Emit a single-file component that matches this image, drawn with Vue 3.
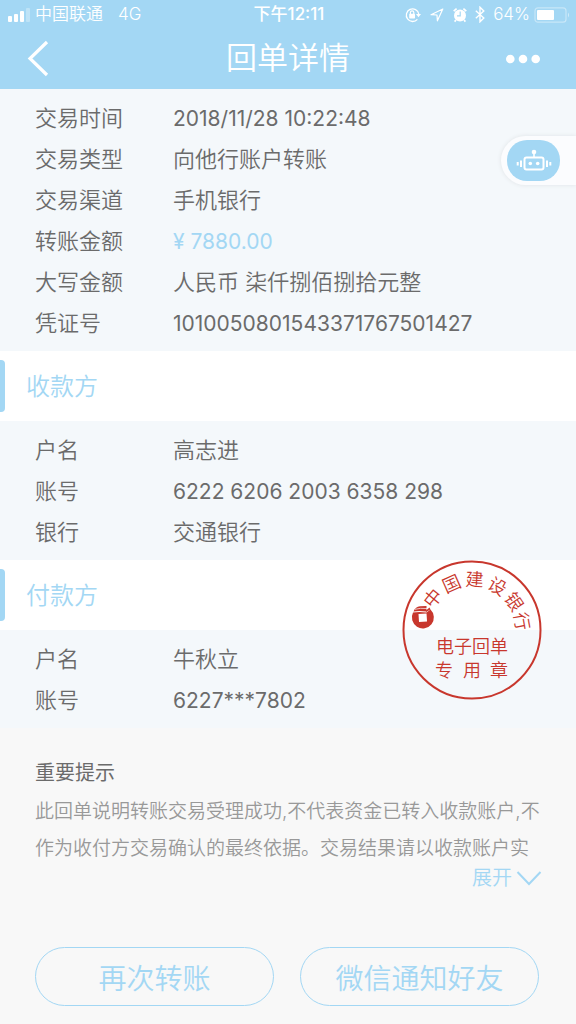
<script setup>
const sections = [
  {
    rows: [
      { label: '交易时间', value: '2018/11/28 10:22:48', numeric: true },
      { label: '交易类型', value: '向他行账户转账' },
      { label: '交易渠道', value: '手机银行' },
      { label: '转账金额', value: '¥ 7880.00', numeric: true, accent: true },
      { label: '大写金额', value: '人民币 柒仟捌佰捌拾元整' },
      { label: '凭证号', value: '1010050801543371767501427', numeric: true },
    ],
  },
  {
    title: '收款方',
    rows: [
      { label: '户名', value: '高志进' },
      { label: '账号', value: '6222 6206 2003 6358 298', numeric: true },
      { label: '银行', value: '交通银行' },
    ],
  },
  {
    title: '付款方',
    stamp: true,
    rows: [
      { label: '户名', value: '牛秋立' },
      { label: '账号', value: '6227***7802', numeric: true },
    ],
  },
]

const arc = [
  { ch: '中', angle: -51 },
  { ch: '国', angle: -24 },
  { ch: '建', angle: 3 },
  { ch: '设', angle: 30 },
  { ch: '银', angle: 56 },
  { ch: '行', angle: 80 },
]
</script>

<template>
  <div class="page">
    <header class="top">
      <div class="status">
        <div class="status-left">
          <svg class="signal" width="24" height="16" viewBox="0 0 24 16" aria-hidden="true">
            <rect x="0" y="9" width="4" height="6" rx="1" />
            <rect x="6" y="7" width="4" height="8" rx="1" />
            <rect x="12" y="4" width="4" height="11" rx="1" />
            <rect x="18" y="1" width="4" height="14" rx="1" opacity=".3" />
          </svg>
          <span>中国联通</span>
          <span class="net">4G</span>
        </div>
        <span class="clock">下午12:11</span>
        <div class="status-right">
          <svg width="16" height="16" viewBox="0 0 16 16" aria-hidden="true">
            <path d="M12.4 12.3A6.3 6.3 0 1 1 13.8 7" fill="none" stroke="#fff" stroke-width="1.3" />
            <path d="M11 7h5l-2.5 3.2z" />
            <rect x="4.2" y="6.8" width="5.8" height="4.6" rx=".6" />
            <path d="M5.4 7V5.6a1.7 1.7 0 0 1 3.4 0V7" fill="none" stroke="#fff" stroke-width="1.2" />
          </svg>
          <svg class="locate" width="14" height="14" viewBox="0 0 14 14" aria-hidden="true">
            <path d="M12.8 1L1 6.7l6 .3.4 5.8z" fill="none" stroke="#fff" stroke-width="1.2" stroke-linejoin="round" />
          </svg>
          <svg class="alarm" width="14" height="16" viewBox="0 0 14 16" aria-hidden="true">
            <circle cx="7" cy="8.4" r="6" />
            <path d="M.7 4.2L3.6 1.6M13.3 4.2l-2.9-2.6M3 13l-1.4 1.6M11 13l1.4 1.6" stroke="#fff" stroke-width="1.7" />
            <path d="M7.2 4.6v4.2H4" fill="none" stroke="#a3d7f4" stroke-width="1.2" />
          </svg>
          <svg class="bluetooth" width="10" height="17" viewBox="0 0 10 17" aria-hidden="true">
            <path d="M.8 4.8l8 7.2L5 15.8V1.2L8.8 5l-8 7.2" fill="none" stroke="#fff" stroke-width="1.4" />
          </svg>
          <span>64%</span>
          <svg class="battery" width="36" height="16" viewBox="0 0 36 16" aria-hidden="true">
            <rect x="1" y=".8" width="31" height="14.4" rx="3" fill="none" stroke="#fff" stroke-opacity=".4" stroke-width="1.2" />
            <rect x="3" y="3" width="17" height="10" rx="1" />
            <path d="M34 5.5q2 2.5 0 5z" opacity=".5" />
          </svg>
        </div>
      </div>
      <div class="nav">
        <button class="back" type="button" aria-label="返回">
          <svg width="24" height="38" viewBox="0 0 24 38" aria-hidden="true">
            <path d="M21 2L4 18.5 21 35" fill="none" stroke="#fff" stroke-width="3.2" />
          </svg>
        </button>
        <h1>回单详情</h1>
        <button class="more" type="button" aria-label="更多">
          <svg width="34" height="10" viewBox="0 0 34 10" aria-hidden="true">
            <circle cx="4.3" cy="5" r="4.3" />
            <circle cx="17" cy="5" r="4.3" />
            <circle cx="29.7" cy="5" r="4.3" />
          </svg>
        </button>
      </div>
    </header>

    <main>
      <section v-for="(section, i) in sections" :key="i" class="section">
        <h2 v-if="section.title">{{ section.title }}</h2>
        <dl>
          <div v-for="row in section.rows" :key="row.label" class="row">
            <dt>{{ row.label }}</dt>
            <dd :class="{ accent: row.accent, numeric: row.numeric }">{{ row.value }}</dd>
          </div>
        </dl>
        <svg v-if="section.stamp" class="stamp" width="140" height="140" viewBox="0 0 140 140">
          <circle cx="70" cy="70" r="68.5" fill="none" stroke="#c8372d" stroke-width="2" />
          <text
            v-for="item in arc"
            :key="item.ch"
            x="70"
            y="26"
            :transform="`rotate(${item.angle} 70 70)`"
          >{{ item.ch }}</text>
          <path d="M11 52.500Q17 51.500 24.500 52.500L28.500 49.500A11 11 0 1 1 11 52.500z" />
          <path d="M11.500 51.500Q13.500 46.600 18 46.300L24.500 46V51.500Q17 50.500 11.500 51.500z" />
          <path d="M24 52l4.500-2.500-1-2-3.500 3z" />
          <path d="M13 49.300Q18 47.800 25 48.500" fill="none" stroke="#fff" stroke-width=".7" />
          <path d="M16.500 54l8-.5.5 8-8 .5z" fill="#fff" />
          <text x="70" y="93">电子回单</text>
          <text x="42" y="117">专</text>
          <text x="70" y="117">用</text>
          <text x="97" y="117">章</text>
        </svg>
      </section>

      <section class="notice">
        <h3>重要提示</h3>
        <p>此回单说明转账交易受理成功,不代表资金已转入收款账户,不<br />作为收付方交易确认的最终依据。交易结果请以收款账户实</p>
        <button class="expand" type="button">
          展开
          <svg width="26" height="16" viewBox="0 0 26 16" aria-hidden="true">
            <path d="M1.5 2L13 14 24.5 2" fill="none" stroke="#a3d7f4" stroke-width="2" />
          </svg>
        </button>
      </section>
    </main>

    <button class="assistant" type="button" aria-label="智能客服">
      <span class="bot">
        <svg width="36" height="24" viewBox="0 0 36 24" aria-hidden="true">
          <circle cx="18" cy="3" r="2.3" />
          <path d="M18 4v5" stroke="#fff" stroke-width="1.6" />
          <rect x="8.5" y="8.5" width="19" height="12" rx="2" fill="none" stroke="#fff" stroke-width="2" />
          <circle cx="14.3" cy="14.5" r="1.8" />
          <circle cx="21.7" cy="14.5" r="1.8" />
          <path d="M5 11.5v6.5M31 11.5v6.5" stroke="#fff" stroke-width="2" />
          <path d="M1.7 13v3.5M34.3 13v3.5" stroke="#fff" stroke-width="2" />
        </svg>
      </span>
    </button>

    <footer>
      <button type="button">再次转账</button>
      <button type="button">微信通知好友</button>
    </footer>
  </div>
</template>

<style>
body {
  background: #f8f8f8;
}
</style>

<style scoped>
.page {
  position: relative;
  min-height: 100vh;
  display: flex;
  flex-direction: column;
  background: #f8f8f8;
  color: #6b6b6b;
  font-family: Inter, "Noto Sans CJK SC", sans-serif;
  font-weight: 350;
}
button {
  font: inherit;
  color: inherit;
  background: none;
  border: 0;
  padding: 0;
  cursor: pointer;
}
svg {
  display: block;
  fill: #fff;
}
h1, h2, h3, p, dl, dd {
  margin: 0;
  font-weight: inherit;
}
.top {
  background: #a3d7f4;
  color: #fff;
}
.status {
  display: grid;
  grid-template-columns: 1fr auto 1fr;
  align-items: center;
  height: 29px;
  padding: 0 6px 0 8px;
  font-size: 17px;
  line-height: 29px;
}
.status-left, .status-right {
  display: flex;
  align-items: center;
}
.status-left { gap: 3px; }
.net { margin-left: 12px; }
.clock { font-weight: 500; }
.status-right { justify-content: flex-end; }
.locate { margin-left: 9px; }
.alarm { margin-left: 9px; }
.bluetooth { margin: 0 8px; }
.battery { margin-left: 4px; }
.nav {
  display: grid;
  grid-template-columns: 1fr auto 1fr;
  align-items: center;
  height: 60px;
  padding: 0 26px;
  box-sizing: border-box;
}
.back { justify-self: start; }
.more {
  justify-self: end;
  margin-right: 10px;
}
h1 {
  font-size: 31px;
  line-height: 58px;
  padding-bottom: 2px;
}
.section { position: relative; }
h2 {
  position: relative;
  background: #fff;
  color: #a3d7f4;
  font-size: 24px;
  line-height: 68px;
  padding: 2px 0 0 26px;
}
h2::before {
  content: "";
  position: absolute;
  left: 0;
  top: 9px;
  bottom: 9px;
  width: 5px;
  border-radius: 0 4px 4px 0;
  background: #a3d7f4;
}
dl {
  background: #f4f8fb;
  padding: 9px 35px 7px;
}
.row {
  display: grid;
  grid-template-columns: 138px 1fr;
  font-size: 22px;
  line-height: 41px;
}
.numeric {
  font-size: 21px;
  font-weight: 400;
}
.accent { color: #a3d7f4; }
.stamp {
  position: absolute;
  right: 34px;
  top: 0;
  fill: #c8372d;
  font-size: 18px;
  text-anchor: middle;
}
.notice {
  padding: 25px 34px 0 35px;
}
h3 {
  font-size: 20px;
  line-height: 40px;
  font-weight: 400;
}
.notice p {
  font-size: 19px;
  line-height: 37px;
  color: #999;
  white-space: nowrap;
}
.expand {
  display: flex;
  align-items: center;
  gap: 4px;
  margin-left: auto;
  font-size: 20px;
  line-height: 22px;
  color: #a3d7f4;
}
.assistant {
  position: absolute;
  right: 0;
  top: 136px;
  padding: 4px 16px 4px 6px;
  border-radius: 25px 0 0 25px;
  background: #fbfcfe;
  box-shadow: 0 0 4px #dfe3e6;
}
.bot {
  display: flex;
  align-items: center;
  justify-content: center;
  width: 53px;
  height: 41px;
  border-radius: 20px;
  background: #a3d7f4;
}
footer {
  display: grid;
  grid-template-columns: 1fr 1fr;
  gap: 26px;
  margin-top: auto;
  padding: 32px 37px 18px 35px;
}
footer button {
  height: 59px;
  border: 1px solid #a3d7f4;
  border-radius: 30px;
  color: #a3d7f4;
  font-size: 28px;
}
</style>
